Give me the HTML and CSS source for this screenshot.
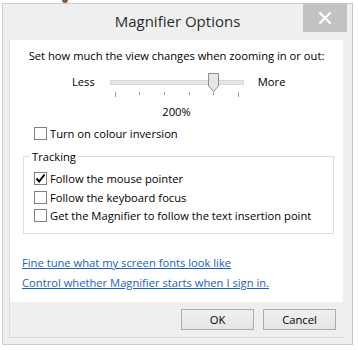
FILE: index.html
```html
<!DOCTYPE html>
<html>
<head>
<meta charset="utf-8">
<link rel="stylesheet" href="styles.css">
</head>
<body>
<div class="peek"></div>
<div class="window">
  <div class="titlebar">
    <span class="title">Magnifier Options</span>
    <div class="close">
      <svg width="14" height="14" viewBox="0 0 14 14"><path d="M1.5 1.5 L12.5 12.5 M12.5 1.5 L1.5 12.5" stroke="#fff" stroke-width="2.4" fill="none"/></svg>
    </div>
  </div>
  <div class="client">
    <div class="content">
      <p class="heading">Set how much the view changes when zooming in or out:</p>
      <div class="slider-row">
        <span class="end-label less">Less</span>
        <div class="slider">
          <div class="track"></div>
          <div class="ticks"><i class="long"></i><i></i><i></i><i></i><i></i><i class="long"></i></div>
          <svg class="thumb" width="11" height="19" viewBox="0 0 11 19"><path d="M0.5 0.5 H10.5 V13 L5.5 18.5 L0.5 13 Z" fill="#e6e6e6" stroke="#8f8f8f"/></svg>
        </div>
        <span class="end-label more">More</span>
      </div>
      <div class="value">200%</div>
      <label class="check top-check"><span class="box"></span>Turn on colour inversion</label>
      <fieldset class="group">
        <legend>Tracking</legend>
        <label class="check"><span class="box checked"><svg width="11" height="11" viewBox="0 0 11 11"><path d="M1.5 5.5 L4.2 8.5 L9.5 1.5" stroke="#000" stroke-width="2" fill="none"/></svg></span>Follow the mouse pointer</label>
        <label class="check"><span class="box"></span>Follow the keyboard focus</label>
        <label class="check"><span class="box"></span>Get the Magnifier to follow the text insertion point</label>
      </fieldset>
      <div class="links">
        <a class="link" href="#">Fine tune what my screen fonts look like</a>
        <a class="link" href="#">Control whether Magnifier starts when I sign in.</a>
      </div>
    </div>
    <div class="footer">
      <button class="btn">OK</button>
      <button class="btn">Cancel</button>
    </div>
  </div>
</div>
</body>
</html>
```
FILE: styles.css
```css
html, body {
  margin: 0;
  padding: 0;
  background: #ffffff;
}
body {
  width: 358px;
  height: 350px;
  overflow: hidden;
  position: relative;
  font-family: "Open Sans", "Noto Sans", sans-serif;
  font-size: 11.2px;
  color: #000;
}
.peek {
  position: absolute;
  left: 62px;
  top: 0;
  width: 6px;
  height: 3px;
  background: #8a5a32;
  border-radius: 0 0 3px 3px;
}
.window {
  margin: 3px 0 0 2px;
  width: 351px;
  height: 342px;
  box-sizing: border-box;
  border: 1px solid #cdcdcd;
  border-right: 1px solid #c4c4c4;
  background: #efefef;
}
.titlebar {
  display: grid;
  height: 36px;
}
.title {
  grid-area: 1 / 1;
  justify-self: center;
  align-self: center;
  font-size: 15px;
  color: #2b2b2b;
  margin-top: -2px;
}
.close {
  grid-area: 1 / 1;
  justify-self: end;
  align-self: start;
  margin-top: -1px;
  margin-right: 5px;
  width: 44px;
  height: 29px;
  background: #c2c2c2;
  display: flex;
  align-items: center;
  justify-content: center;
}
.client {
  margin-left: 6px;
  width: 334px;
  border-left: 1px solid #dedede;
  border-bottom: 1px solid #d6d6d6;
  box-sizing: border-box;
}
.content {
  background: #ffffff;
  height: 262px;
  padding-top: 8px;
  box-sizing: border-box;
}
.heading {
  margin: 0;
  text-align: center;
  line-height: 16px;
}
.slider-row {
  display: flex;
  align-items: flex-start;
  margin-top: 8px;
  padding-left: 62px;
}
.end-label {
  line-height: 20px;
}
.less {
  margin-right: 15px;
}
.more {
  margin-left: 14px;
}
.slider {
  position: relative;
  width: 134px;
  height: 26px;
}
.track {
  margin-top: 8px;
  height: 3px;
  background: #e7e7e7;
  border: 1px solid #d9d9d9;
}
.ticks {
  display: flex;
  justify-content: space-between;
  margin: 7px 5px 0 5px;
}
.ticks i {
  display: block;
  width: 1px;
  height: 3px;
  background: #9a9a9a;
}
.ticks i.long {
  height: 5px;
}
.thumb {
  position: absolute;
  left: 98px;
  top: 1px;
}
.value {
  text-align: center;
  line-height: 16px;
  margin-top: 6px;
}
.check {
  display: flex;
  align-items: center;
  height: 18.5px;
  gap: 3px;
}
.top-check {
  margin-top: 4px;
  margin-left: 24px;
}
.box {
  width: 13px;
  height: 13px;
  box-sizing: border-box;
  border: 1px solid #808080;
  background: #fff;
  display: flex;
  align-items: center;
  justify-content: center;
}
.group {
  margin: 6px 9px 0 13px;
  padding: 5px 0 8px 10px;
  border: 1px solid #dcdcdc;
  min-width: 0;
}
.group legend {
  padding: 0 2px;
  margin-left: -4px;
  line-height: 16px;
}
.links {
  display: flex;
  flex-direction: column;
  align-items: flex-start;
  margin-top: 19px;
  margin-left: 12px;
}
.link {
  color: #1a62b8;
  text-decoration: underline;
  line-height: 20px;
}
.footer {
  height: 35px;
  display: flex;
  justify-content: flex-end;
  align-items: flex-start;
  gap: 9px;
  padding: 7px 7px 0 0;
  box-sizing: border-box;
}
.btn {
  width: 73px;
  height: 21px;
  border: 1px solid #acacac;
  background: linear-gradient(#f0f0f0, #e5e5e5);
  font-family: "Open Sans", "Noto Sans", sans-serif;
  font-size: 11.2px;
  color: #000;
  padding: 0;
  margin: 0;
}
```
